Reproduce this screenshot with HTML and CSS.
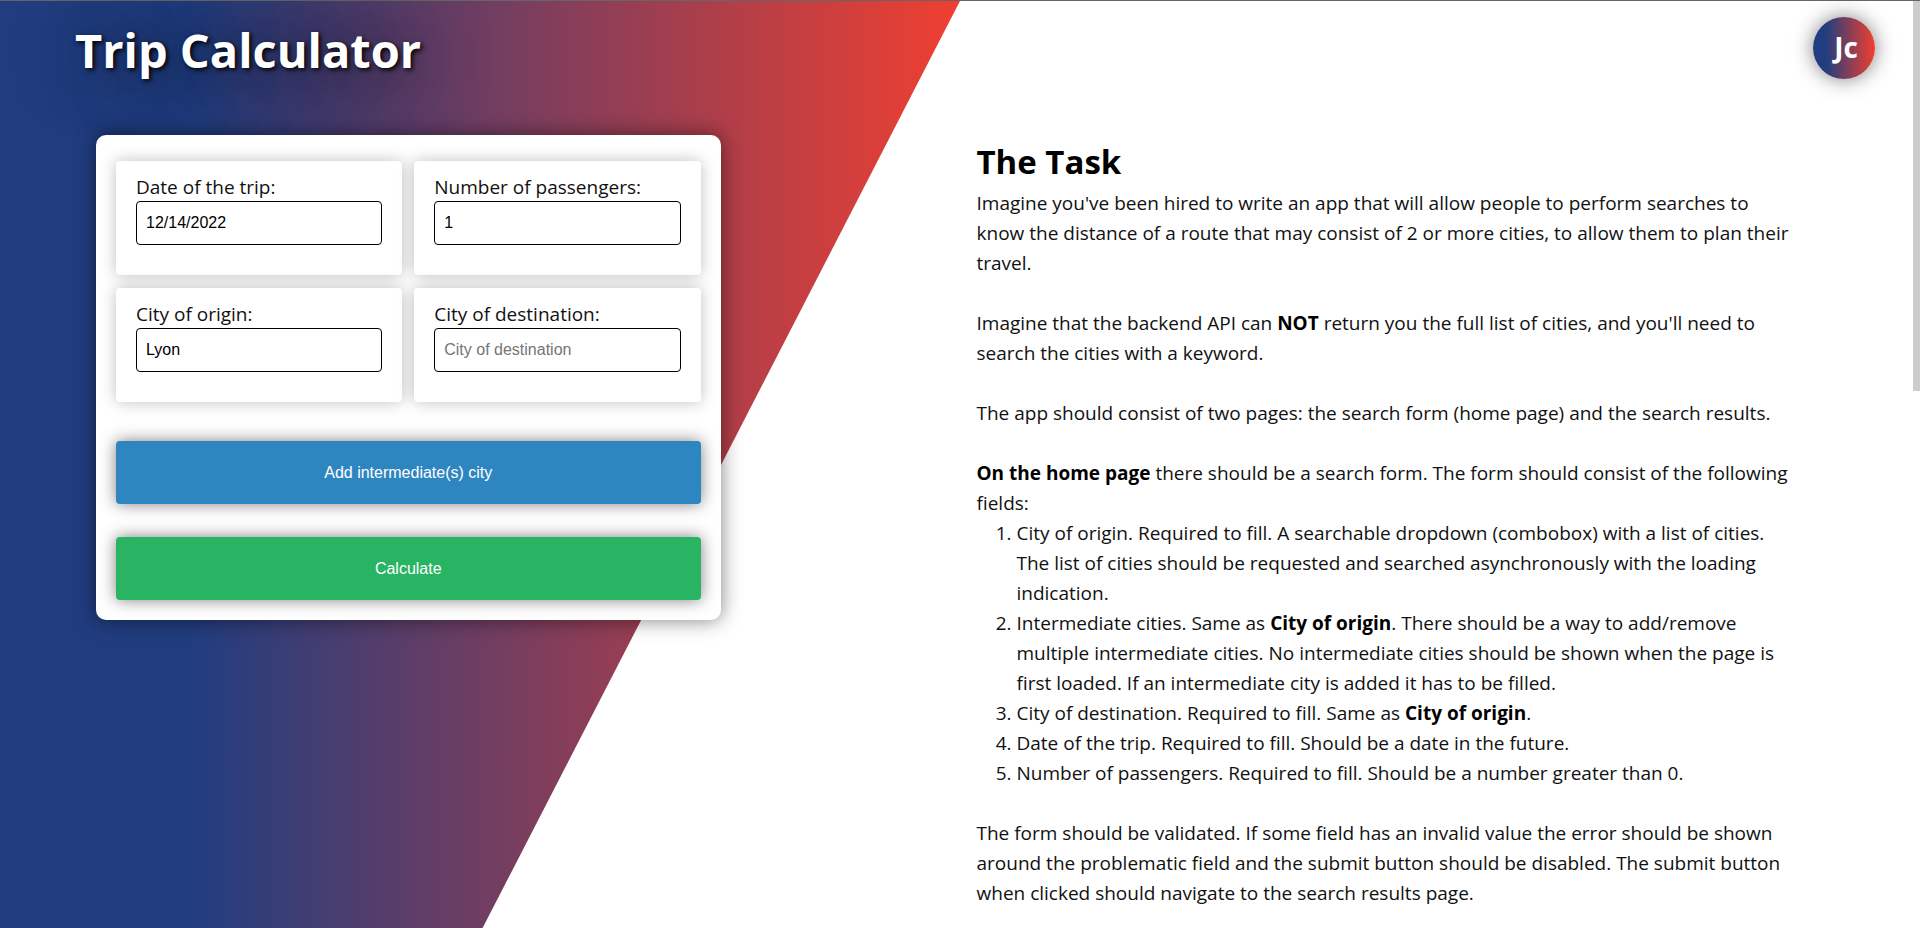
FILE: index.html
```html
<!DOCTYPE html>
<html lang="en">
<head>
<meta charset="utf-8">
<meta name="viewport" content="width=device-width, initial-scale=1">
<title>Trip Calculator</title>
<link rel="stylesheet" href="styles.css">
</head>
<body>
<div class="page">
  <div class="backdrop"></div>
  <header class="header">
    <h1 class="title">Trip Calculator</h1>
    <a class="logo" href="#">Jc</a>
  </header>
  <main class="main">
    <form class="card">
      <div class="fields">
        <div class="field">
          <label for="date">Date of the trip:</label>
          <input id="date" type="text" value="12/14/2022">
        </div>
        <div class="field">
          <label for="passengers">Number of passengers:</label>
          <input id="passengers" type="text" inputmode="numeric" value="1">
        </div>
        <div class="field">
          <label for="origin">City of origin:</label>
          <input id="origin" type="text" value="Lyon" placeholder="City of origin">
        </div>
        <div class="field">
          <label for="destination">City of destination:</label>
          <input id="destination" type="text" placeholder="City of destination">
        </div>
      </div>
      <button class="button button-add" type="button">Add intermediate(s) city</button>
      <button class="button button-submit" type="submit">Calculate</button>
    </form>
    <article class="task">
      <h2>The Task</h2>
      <p>Imagine you've been hired to write an app that will allow people to perform searches to know the distance of a route that may consist of 2 or more cities, to allow them to plan their travel.</p>
      <p>Imagine that the backend API can <b>NOT</b> return you the full list of cities, and you'll need to search the cities with a keyword.</p>
      <p>The app should consist of two pages: the search form (home page) and the search results.</p>
      <p class="lead"><b>On the home page</b> there should be a search form. The form should consist of the following fields:</p>
      <ol>
        <li>City of origin. Required to fill. A searchable dropdown (combobox) with a list of cities. The list of cities should be requested and searched asynchronously with the loading indication.</li>
        <li>Intermediate cities. Same as <b>City of origin</b>. There should be a way to add/remove multiple intermediate cities. No intermediate cities should be shown when the page is first loaded. If an intermediate city is added it has to be filled.</li>
        <li>City of destination. Required to fill. Same as <b>City of origin</b>.</li>
        <li>Date of the trip. Required to fill. Should be a date in the future.</li>
        <li>Number of passengers. Required to fill. Should be a number greater than 0.</li>
      </ol>
      <p class="lead">The form should be validated. If some field has an invalid value the error should be shown around the problematic field and the submit button should be disabled. The submit button when clicked should navigate to the search results page.</p>
    </article>
  </main>
  <div class="scroll-thumb"></div>
</div>
</body>
</html>
```

FILE: styles.css
```css
* {
  box-sizing: border-box;
  margin: 0;
  padding: 0;
}

:root {
  --brand: linear-gradient(90deg, #213d7f 20%, #f03f31 100%);
}

body {
  background: #fff;
  color: #111;
  font-family: "Segoe UI", "Open Sans", "Noto Sans", sans-serif;
  font-size: 19px;
  line-height: 30px;
}

.page {
  position: relative;
  min-height: 100vh;
  border-top: 1px solid #666;
}

.backdrop {
  position: absolute;
  inset: 0 50% 0 0;
  background: var(--brand);
  clip-path: polygon(0 0, 100% 0, 50% calc(100% + 5px), 0 100%);
}

.header {
  position: relative;
  display: flex;
  justify-content: space-between;
  align-items: flex-start;
  padding: 16px 45px 0 75px;
}

.title {
  color: #fff;
  font-size: 47px;
  line-height: 66px;
  text-shadow: 2px 2px 5px #000, 5px 5px 70px #000;
}

.logo {
  width: 62px;
  height: 62px;
  border-radius: 50%;
  background: var(--brand);
  box-shadow: 0 0 20px rgba(0, 0, 0, 0.5);
  color: #fff;
  font-size: 28px;
  font-weight: 700;
  line-height: 60px;
  padding-left: 4px;
  text-align: center;
  text-decoration: none;
}

.main {
  position: relative;
  display: grid;
  grid-template-columns: 1fr 1fr;
  align-items: start;
  padding: 52px 7px 0 0;
}

.card {
  display: flex;
  flex-direction: column;
  margin: 0 236px 0 96px;
  padding: 26px 20px 20px;
  border-radius: 10px;
  background: #fff;
  box-shadow: 0 0 20px rgba(0, 0, 0, 0.5);
}

.fields {
  display: grid;
  grid-template-columns: 1fr 1fr;
  gap: 13px 12px;
  margin-bottom: 39px;
}

.field {
  padding: 12px 20px 30px;
  border-radius: 4px;
  background: #fff;
  box-shadow: 0 0 16px rgba(0, 0, 0, 0.25);
}

.field label {
  display: block;
  line-height: 28px;
}

.field input {
  display: block;
  width: 100%;
  height: 44px;
  padding: 0 9px;
  border: 1px solid #000;
  border-radius: 4px;
  background: #fff;
  color: #000;
  font: 16px "Liberation Sans", Arial, sans-serif;
}

.field input::placeholder {
  color: #757575;
}

.button {
  height: 63px;
  border: 0;
  border-radius: 4px;
  box-shadow: 0 0 16px rgba(0, 0, 0, 0.5);
  color: #fff;
  font: 16px "Liberation Sans", Arial, sans-serif;
}

.button-add {
  margin-bottom: 33px;
  background: #2e86c1;
}

.button-submit {
  background: #28b463;
}

.task {
  padding: 4px 112px 20px 20px;
}

.task h2 {
  margin-bottom: 3px;
  color: #000;
  font-size: 33px;
  line-height: 46px;
}

.task b {
  color: #000;
}

.task p {
  margin-bottom: 30px;
}

.task .lead {
  margin-bottom: 0;
}

.task ol {
  margin-bottom: 30px;
  padding-left: 40px;
}

.scroll-thumb {
  position: absolute;
  top: 0;
  right: 0;
  width: 7px;
  height: 390px;
  background: #ccc;
}
```
